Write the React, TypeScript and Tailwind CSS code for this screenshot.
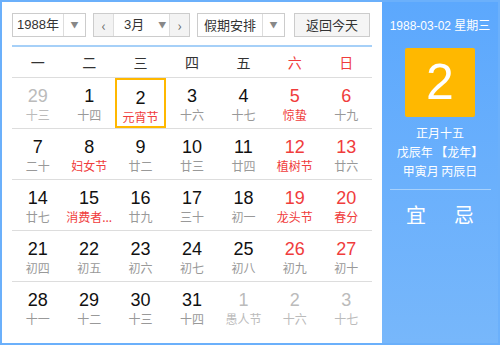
import React from 'react';

type Day = { n: number; sub: string; muted?: boolean; red?: boolean; subRed?: boolean; today?: boolean };

const weeks: Day[][] = [
  [
    { n: 29, sub: '十三', muted: true },
    { n: 1, sub: '十四' },
    { n: 2, sub: '元宵节', subRed: true, today: true },
    { n: 3, sub: '十六' },
    { n: 4, sub: '十七' },
    { n: 5, sub: '惊蛰', red: true, subRed: true },
    { n: 6, sub: '十九', red: true },
  ],
  [
    { n: 7, sub: '二十' },
    { n: 8, sub: '妇女节', subRed: true },
    { n: 9, sub: '廿二' },
    { n: 10, sub: '廿三' },
    { n: 11, sub: '廿四' },
    { n: 12, sub: '植树节', red: true, subRed: true },
    { n: 13, sub: '廿六', red: true },
  ],
  [
    { n: 14, sub: '廿七' },
    { n: 15, sub: '消费者...', subRed: true },
    { n: 16, sub: '廿九' },
    { n: 17, sub: '三十' },
    { n: 18, sub: '初一' },
    { n: 19, sub: '龙头节', red: true, subRed: true },
    { n: 20, sub: '春分', red: true, subRed: true },
  ],
  [
    { n: 21, sub: '初四' },
    { n: 22, sub: '初五' },
    { n: 23, sub: '初六' },
    { n: 24, sub: '初七' },
    { n: 25, sub: '初八' },
    { n: 26, sub: '初九', red: true },
    { n: 27, sub: '初十', red: true },
  ],
  [
    { n: 28, sub: '十一' },
    { n: 29, sub: '十二' },
    { n: 30, sub: '十三' },
    { n: 31, sub: '十四' },
    { n: 1, sub: '愚人节', muted: true },
    { n: 2, sub: '十六', muted: true },
    { n: 3, sub: '十七', muted: true },
  ],
];

const heads = ['一', '二', '三', '四', '五', '六', '日'];

const Caret = () => <span className="text-[8px] text-[#888] leading-none">▼</span>;

const DayCell = ({ d }: { d: Day }) => {
  const numColor = d.muted ? 'text-[#bbb]' : d.red ? 'text-[#f03c3c]' : 'text-[#111]';
  const subColor = d.muted ? 'text-[#bbb]' : d.subRed ? 'text-[#f03c3c]' : 'text-[#999]';
  return (
    <div
      className={`flex flex-col items-center h-[50px] pt-[7px] ${
        d.today ? 'border-2 border-[#ffb800] pt-[5px]' : ''
      }`}
    >
      <span className={`font-['Liberation_Sans',sans-serif] text-[18px] leading-[22px] ${numColor}`}>{d.n}</span>
      <span className={`text-[12px] leading-[16px] whitespace-nowrap ${subColor}`}>{d.sub}</span>
    </div>
  );
};

export default function App() {
  return (
    <div className="w-[500px] h-[345px] border-2 border-[#6bb0fb] flex font-['Noto_Sans_CJK_SC',sans-serif] bg-white">
      <div className="w-[380px] px-[10px] pt-[11px]">
        <div className="flex items-center h-[24px] text-[13px] text-[#333]">
          <div className="flex h-full w-[74px] border border-[#ccc]">
            <div className="flex-1 flex items-center justify-center font-['Liberation_Sans','Noto_Sans_CJK_SC',sans-serif]">1988年</div>
            <div className="w-[22px] border-l border-[#ddd] flex items-center justify-center"><Caret /></div>
          </div>
          <div className="flex h-full w-[97px] ml-[7px] border border-[#ccc]">
            <div className="w-[20px] bg-[#f3f3f3] border-r border-[#ddd] flex items-center justify-center text-[#666] text-[14px]">‹</div>
            <div className="flex-1 flex items-center pl-[10px] gap-[14px]">
              <span className="font-['Liberation_Sans','Noto_Sans_CJK_SC',sans-serif]">3月</span>
              <Caret />
            </div>
            <div className="w-[20px] bg-[#f3f3f3] border-l border-[#ddd] flex items-center justify-center text-[#666] text-[14px]">›</div>
          </div>
          <div className="flex h-full w-[88px] ml-[7px] border border-[#ccc]">
            <div className="flex-1 flex items-center justify-center">假期安排</div>
            <div className="w-[22px] border-l border-[#ddd] flex items-center justify-center"><Caret /></div>
          </div>
          <div className="h-full w-[76px] ml-[9px] border border-[#ccc] bg-[#f5f5f5] flex items-center justify-center">返回今天</div>
        </div>
        <div className="h-[2px] bg-[#a6d0f8] mt-[8px]" />
        <div className="grid grid-cols-7 h-[31px] border-b border-[#ddd] text-[14px] text-[#333] items-center">
          {heads.map((h, i) => (
            <div key={h} className={`text-center ${i >= 5 ? 'text-[#f03c3c]' : ''}`}>{h}</div>
          ))}
        </div>
        {weeks.map((w, i) => (
          <div key={i} className={`grid grid-cols-7 ${i < 4 ? 'border-b border-[#ddd]' : ''}`}>
            {w.map((d, j) => (
              <DayCell key={j} d={d} />
            ))}
          </div>
        ))}
      </div>
      <div className="flex-1 bg-gradient-to-b from-[#5ca8fd] to-[#77b7fb] flex flex-col items-center text-white">
        <div className="mt-[16px] text-[12px] leading-[16px] font-['Liberation_Sans','Noto_Sans_CJK_SC',sans-serif]">1988-03-02 星期三</div>
        <div className="mt-[14px] w-[70px] h-[69px] bg-[#ffb800] rounded-[2px] flex items-center justify-center text-[50px] font-['Liberation_Sans',sans-serif]">2</div>
        <div className="mt-[6px] text-[12px] leading-[19px] text-center">
          <div>正月十五</div>
          <div>戊辰年 【龙年】</div>
          <div>甲寅月 丙辰日</div>
        </div>
        <div className="mt-[9px] w-[101px] h-px bg-[#a8d1fc]" />
        <div className="mt-[12px] flex gap-[28px] text-[20px] leading-[26px]">
          <span>宜</span>
          <span>忌</span>
        </div>
      </div>
    </div>
  );
}
